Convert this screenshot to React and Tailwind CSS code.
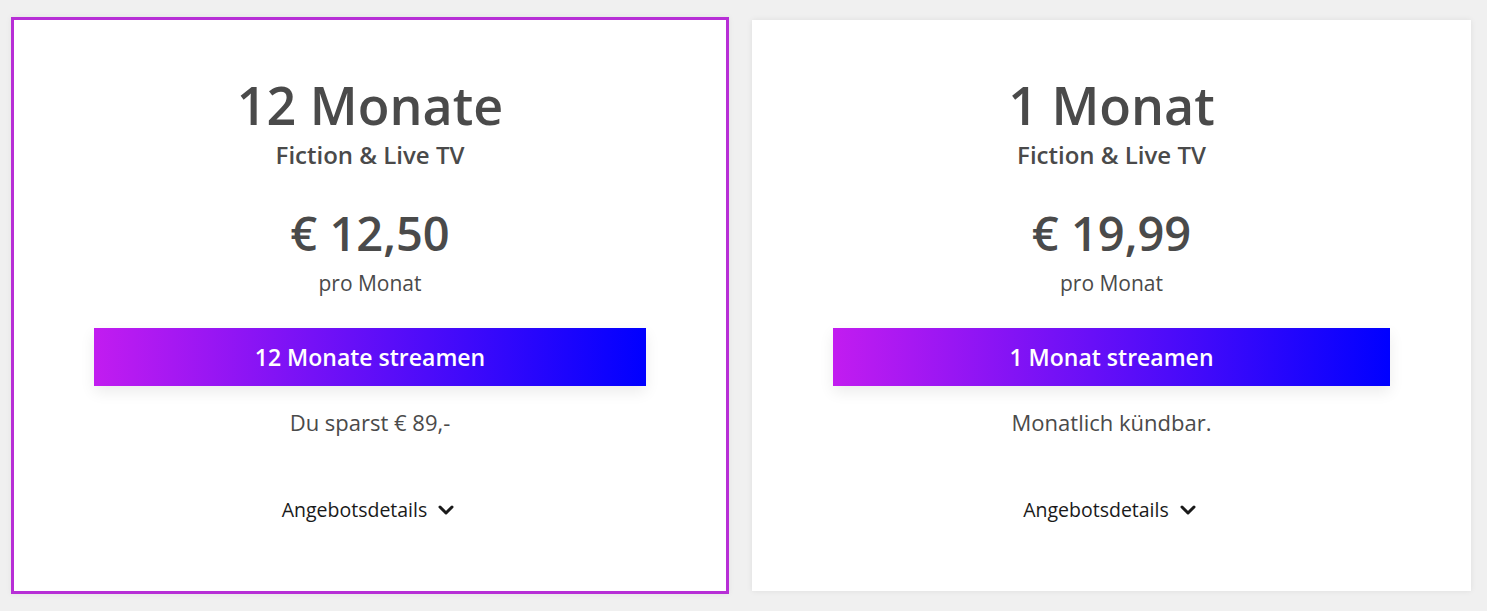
import React from 'react';
import { ChevronDown } from 'lucide-react';

const plans = [
  {
    title: '12 Monate',
    price: '€ 12,50',
    cta: '12 Monate streamen',
    note: 'Du sparst € 89,-',
    selected: true,
  },
  {
    title: '1 Monat',
    price: '€ 19,99',
    cta: '1 Monat streamen',
    note: 'Monatlich kündbar.',
    selected: false,
  },
];

const PlanCard = ({ plan }) => (
  <div
    className={
      plan.selected
        ? 'w-[718px] h-[577px] bg-white border-[3px] border-[#b72fd6] flex flex-col items-center pt-[58px] shadow-[0_0_6px_rgba(0,0,0,0.06)]'
        : 'w-[719px] h-[571px] bg-white flex flex-col items-center pt-[58px] shadow-[0_0_6px_rgba(0,0,0,0.08)]'
    }
  >
    <h2 className="text-[52px] leading-[54px] font-semibold text-[#4a4a4a]">{plan.title}</h2>
    <p className="mt-[9px] text-[24px] leading-[28px] font-semibold text-[#4a4a4a]">Fiction &amp; Live TV</p>
    <div className="mt-[40px] text-[47px] leading-[48px] font-semibold text-[#4a4a4a]">{plan.price}</div>
    <p className="mt-[14px] text-[21px] leading-[24px] text-[#4a4a4a]">pro Monat</p>
    <button
      className={
        (plan.selected ? 'w-[552px]' : 'w-[557px]') +
        ' mt-[33px] h-[58px] bg-linear-to-r/srgb from-[#c21cf0] to-[#0000ff] text-white text-[23px] font-semibold shadow-[0_6px_14px_rgba(0,0,0,0.08)]'
      }
    >
      {plan.cta}
    </button>
    <p className="mt-[24px] text-[22px] leading-[24px] text-[#4a4a4a]">{plan.note}</p>
    <button className="mt-[64px] flex items-center gap-[7px] text-[19.5px] leading-[24px] text-[#1a1a1a]">
      Angebotsdetails
      <ChevronDown size={24} strokeWidth={3} />
    </button>
  </div>
);

export default function App() {
  return (
    <div
      className="w-[1487px] h-[611px] bg-[#f0f0f0] flex items-center gap-[23px] pl-[11px] overflow-hidden"
      style={{ fontFamily: '"Open Sans", "Noto Sans", sans-serif' }}
    >
      {plans.map((plan) => (
        <PlanCard key={plan.title} plan={plan} />
      ))}
    </div>
  );
}
